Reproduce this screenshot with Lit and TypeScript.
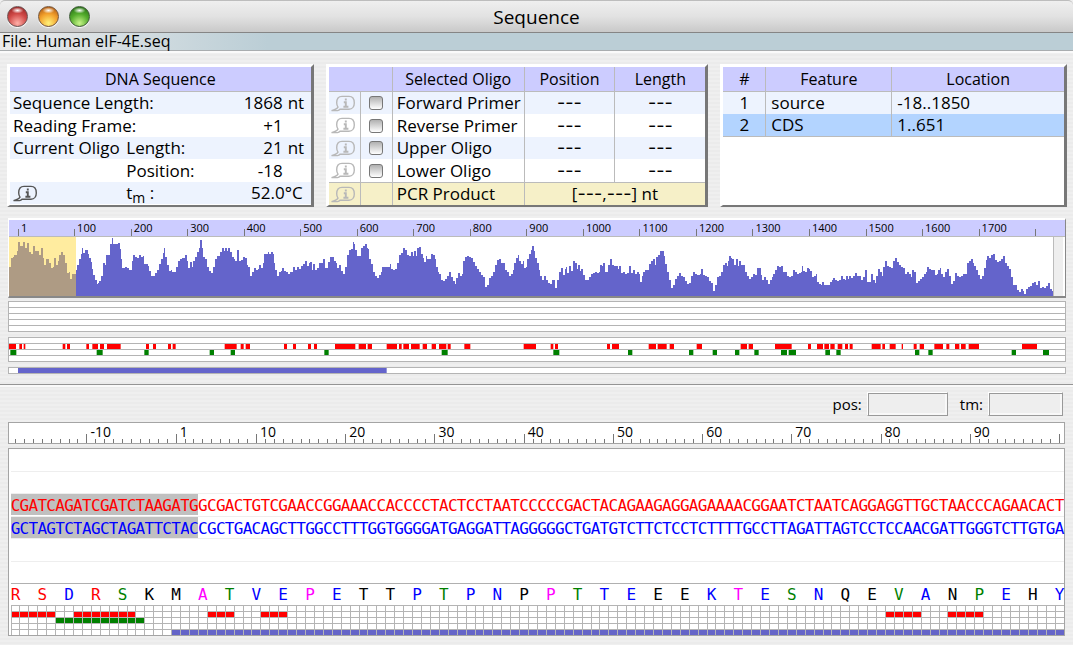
import { LitElement, html, css, svg, nothing } from "lit";
import { customElement, property } from "lit/decorators.js";
import { classMap } from "lit/directives/class-map.js";

const FORWARD =
  "CGATCAGATCGATCTAAGATGGCGACTGTCGAACCGGAAACCACCCCTACTCCTAATCCCCCGACTACAGAAGAGGAGAAAACGGAATCTAATCAGGAGGTTGCTAACCCAGAACACT";
const PAIR: Record<string, string> = { A: "T", T: "A", C: "G", G: "C" };
const REVERSE = [...FORWARD].map((b) => PAIR[b]).join("");
const COLUMNS = FORWARD.length;
const SELECTED = 21;

// One letter per codon, and the colour class of each (r, b, g, m or k).
const PROTEIN = "RSDRSKMATVEPETTPTPNPPTTEEEKTESNQEVANPEHY";
const PROTEIN_COLORS = "rrbrgkkmgbbmbkkbgbbkmgbbkkbmbgbkkgbkgbkb";

// Runs of cells in the detail grid: row, first cell, end cell, colour.
const CELL_RUNS: [number, number, number, string][] = [
  [1, 0, 5, "#f00"], [1, 7, 14, "#f00"], [1, 22, 25, "#f00"], [1, 28, 31, "#f00"],
  [1, 98, 102, "#f00"], [1, 105, 109, "#f00"], [2, 5, 15, "#008000"], [4, 18, 118, "#6464c8"],
];

// The profile is stored in three tiles of thirds of a unit: tile offset, then x, y pairs.
const PROFILE: [number, number[]][] = [
  [0, [28,158,32,130,38,128,42,122,50,110,54,80,60,92,66,92,70,80,76,98,82,85,86,112,92,118,98,94,104,110,110,108,116,122,122,98,128,130,132,152,138,134,146,146,152,162,158,156,162,130,168,150,174,140,178,122,182,112,190,122,196,146,200,176,206,174,210,194,216,180,222,178,228,166,232,150,236,134,242,118,246,98,250,116,256,106,264,118,268,130,272,142,276,164,280,182,286,196,290,210,294,206,298,200,304,184,308,144,314,152,318,122,324,120,330,86,335,68,339,86,350,88,354,84,360,104,364,134,366,160,374,156,380,162,386,166,390,168,396,138,400,120,406,128,412,130,418,120,422,128,428,124,432,148,438,148,444,154,448,170,454,184,460,184,466,176,472,168,476,148,482,134,488,114,492,98,496,128,500,152,506,170,512,166,516,174,522,174,528,156,534,138,540,132,546,130,552,130,556,122,560,140,564,160,570,142,576,158,580,138,584,126,590,112,596,100,600,76,606,100,610,126,616,134,620,156,626,170,632,176,638,156,644,132,650,124,656,124,660,112,666,98,672,110,676,98,680,110,684,98,690,112,696,126,702,134,706,140,712,106,718,138,724,136,730,128,736,130,740,150,744,158,750,184,756,172,762,160,768,166,774,164,778,150,782,160,788,146,792,118,798,118,804,112,808,118,812,112,818,118,822,146,826,168,832,184,836,172,842,170,846,160,852,170,858,172,864,180,870,174,876,174,880,158,886,166,892,158,898,164,904,154,910,148,916,140,922,154,926,146,930,142,936,168,940,148,946,166,952,162,958,146,964,146,968,134,974,162,978,160,984,142,990,128,996,128,1002,138,1008,144,1012,160,1018,150,1022,170,1030,180,1036,158,1040,122,1046,106]],
  [350, [0,106,4,104,8,80,12,88,16,106,22,124,28,124,32,98,38,94,44,86,50,98,54,104,58,132,64,148,70,172,76,184,82,192,86,182,92,172,96,158,102,158,108,158,114,156,120,148,124,164,130,168,136,164,142,146,146,122,152,114,158,98,164,106,170,122,176,124,182,112,188,124,192,108,198,124,202,98,208,96,212,118,218,130,222,142,228,124,232,132,238,134,244,118,250,122,254,134,258,158,264,172,268,178,274,196,280,200,286,194,292,184,298,174,304,188,308,200,314,208,318,190,324,176,330,184,336,180,340,140,344,128,350,124,356,128,362,130,368,142,374,154,380,164,386,172,392,182,398,188,404,218,410,212,416,190,422,184,428,172,434,150,440,136,446,134,452,146,458,146,464,168,470,172,476,184,482,180,488,168,492,146,498,130,504,122,508,140,514,148,518,140,522,160,528,158,532,132,538,118,542,106,546,92,552,110,556,130,562,146,566,168,570,184,576,198,582,184,588,196,594,206,600,210,606,196,612,198,616,222,622,196,628,174,634,160,638,182,644,164,648,158,652,176,656,154,662,170,668,140,674,144,680,164,684,150,690,170,694,164,700,182,706,196,712,196,718,188,722,178,728,176,734,172,740,176,746,172,750,150,756,154,760,144,764,174,770,172,774,150,780,134,786,150,792,154,798,154,804,164,808,154,812,176,820,174,826,180,832,176,836,154,842,176,848,168,854,178,860,174,866,178,870,204,876,184,880,172,886,168,892,166,898,148,902,140,908,134,914,150,918,126,924,122,930,108,936,110,942,124,946,148,952,172,958,196,964,222,970,212,976,194,982,186,988,176,994,184,1000,188,1006,200,1012,208,1018,206,1024,184,1030,172,1036,178,1042,182]],
  [700, [0,178,4,164,8,182,14,184,20,188,26,200,32,206,38,232,44,212,50,188,56,184,62,172,68,150,74,146,80,154,84,140,88,124,92,130,96,134,102,150,108,134,114,154,118,138,124,150,130,150,136,172,142,184,148,194,154,188,160,180,166,182,170,160,176,162,182,182,186,196,192,188,198,196,204,210,210,196,216,188,220,178,226,166,230,154,236,158,242,154,248,174,254,172,260,186,266,188,272,184,278,166,284,174,290,180,296,176,302,172,306,154,310,170,316,174,320,162,326,164,330,170,336,188,342,184,348,178,352,204,358,208,362,212,366,202,372,212,378,214,386,212,390,202,396,196,400,190,406,196,412,200,418,198,424,184,430,194,434,196,438,184,444,194,448,184,454,190,460,184,466,176,472,186,478,186,484,196,488,188,494,168,500,204,506,202,512,180,518,196,524,206,528,186,534,164,540,172,546,184,550,158,556,140,562,154,568,158,574,160,580,138,586,130,592,142,598,150,604,156,610,160,616,178,620,172,626,180,632,188,636,166,642,174,648,206,654,200,660,194,666,188,672,180,678,174,682,158,688,164,692,168,698,166,704,182,710,180,714,168,720,162,724,180,730,188,736,174,742,164,748,186,752,210,758,200,764,176,770,184,776,188,782,184,788,178,794,178,800,146,806,140,812,134,818,146,822,154,828,168,834,182,840,194,846,186,852,160,858,136,862,124,868,130,874,122,880,118,886,136,892,142,898,138,904,134,908,124,914,146,920,154,926,164,932,188,938,214,944,212,950,228,956,234,962,226,968,232,972,240,978,226,984,218,990,216,996,206,1002,202,1008,214,1014,200,1020,222,1026,218,1032,222,1038,216,1044,206,1050,226,1056,230]],
];

const profilePath = (() => {
  const left = 9;
  let d = "M0 60";
  for (const [offset, values] of PROFILE) {
    for (let i = 0; i < values.length; i += 2) {
      const x = Math.round(offset + values[i] / 3 - left);
      d += `H${x}V${((values[i + 1] - 66) / 3).toFixed(1)}`;
    }
  }
  return d + "H1044V60Z";
})();

type Tile = [number, number[]];
const RED_TILES: Tile[] = [
  [0, [27,48,58,66,71,76,188,196,201,210,259,267,277,294,300,312,321,362,438,447,459,468,504,513,518,527,674,710,722,731,737,750,852,861,879,888,924,933,942,951,1005,1066]],
  [350, [26,48,53,66,110,141,147,155,160,177,183,209,218,231,245,258,267,289,293,302,343,361,521,558,602,610,615,624,771,780,786,807,896,918,923,950,959,972,1040,1056]],
  [700, [122,141,146,159,225,275,324,333,351,369,373,387,391,404,413,427,435,444,449,458,515,542,547,555,569,587,605,609,641,650,659,672,703,729,739,748,765,778,783,797,806,837,966,1011]],
];
const GREEN_TILES: Tile[] = [
  [0, [31,49,290,308,433,446,629,642,692,705,973,986]],
  [350, [275,293,610,628,834,847,1017,1030]],
  [700, [38,51,105,118,163,176,243,261,266,288,376,390,409,422,645,658,685,698,935,948,1029,1047]],
];
const CDS_TILES: Tile[] = [[0, [54, 1160]]];

const marks = (tiles: Tile[], fill: string) => html`
  <svg class="marks" viewBox="0 0 1056 5" preserveAspectRatio="none" aria-hidden="true">
    ${tiles.map(([offset, v]) =>
      v.map((x, i) =>
        i % 2 ? nothing : svg`<rect x=${offset + x / 3 - 9} y="0" width=${(v[i + 1] - x) / 3} height="5" fill=${fill} />`
      )
    )}
  </svg>`;

@customElement("info-button")
export class InfoButton extends LitElement {
  @property() label = "Info";
  @property({ type: Boolean }) off = false;

  static styles = css`
    :host { display: block; }
    button { display: block; margin: 0; padding: 0; border: 0; background: none; color: #555; }
    button:disabled { color: #b8b8b8; }
    svg { display: block; width: 24px; height: 17px; }
  `;

  render() {
    return html`<button type="button" aria-label=${this.label} ?disabled=${this.off}>
      <svg viewBox="0 0 24 17" fill="none" stroke="currentColor" stroke-width="1.4">
        <path d="M.5 15.6H6.5C7.6 15.4 8.4 14.9 9 14.2H18C21.4 14.2 23.3 11.4 23.3 7.9C23.3 4.2 21.4 1.4 18 1.4H11C7.5 1.4 5.7 4.2 5.7 7.8C5.7 9.6 6.1 11 7 12.1C6 13.8 3.8 14.9 .5 15.6Z" />
        <path d="M14.8 3.6V5.4M12.8 7.2H14.8V11.4M12.4 11.7H17.4" stroke-width="1.9" />
      </svg>
    </button>`;
  }
}

@customElement("app-root")
export class AppRoot extends LitElement {
  static styles = css`
    :host {
      display: block;
      min-height: 100vh;
      box-sizing: border-box;
      padding-bottom: 9px;
      background: repeating-linear-gradient(#efefef 0 2px, #ebebeb 2px 4px);
      color: #000;
      font: 17px/22px "Open Sans", "Noto Sans", sans-serif;
    }
    * { box-sizing: border-box; }
    .title {
      display: grid;
      grid-template-columns: 1fr auto 1fr;
      align-items: center;
      height: 33px;
      padding: 0 7px;
      border-top: 1px solid #bdbdbd;
      border-bottom: 1px solid #858585;
      border-radius: 5px 5px 0 0;
      background: linear-gradient(#efefef, #e2e2e2 50%, #c9c9c9);
    }
    .title h1 { margin: 0; font-size: 19px; line-height: 24px; font-weight: 400; }
    .lights { display: flex; gap: 10px; }
    .light {
      width: 21px; height: 21px; padding: 0;
      border: 1px solid #6b5050; border-radius: 50%;
      box-shadow: 0 1px 1px #fff;
    }
    .close { background: radial-gradient(ellipse 6px 3px at 50% 18%, #fff, transparent), radial-gradient(circle at 50% 85%, #ffb0a8, #d04a48 50%, #8d1c1c); }
    .min { background: radial-gradient(ellipse 6px 3px at 50% 18%, #fff, transparent), radial-gradient(circle at 50% 85%, #fff27a, #f2a02c 50%, #a04a10); border-color: #75553a; }
    .zoom { background: radial-gradient(ellipse 6px 3px at 50% 18%, #fff, transparent), radial-gradient(circle at 50% 85%, #c8f58a, #53ab2c 50%, #1e6412); border-color: #3c5a35; }
    .file {
      margin: 0; padding: 0 2px; height: 18px;
      font-size: 16px; line-height: 17px;
      border-bottom: 1px solid #a9adaf;
      box-shadow: 0 2px 0 #fafafa;
      background: linear-gradient(90deg, #ebebeb, #bbced6 25%);
    }
    .panels {
      display: grid;
      grid-template-columns: 307fr 383fr 347fr;
      gap: 12px;
      padding: 13px 6px 0 7px;
    }
    .panel {
      background: #fff;
      border: solid;
      border-width: 3px 3px 2px 3px;
      border-color: #fff #777 #777 #fff;
    }
    table { width: 100%; border-collapse: separate; border-spacing: 0; table-layout: fixed; }
    th, td { padding: 0; font-weight: 400; text-align: left; white-space: nowrap; }
    tr { height: 22px; }
    tbody tr:nth-child(even) { height: 23px; }
    tbody tr:nth-child(odd) { background: #edf3fe; }
    thead tr { height: 25px; background: #ccf; }
    thead th { font-size: 16px; text-align: center; }
    thead tr > * { border-bottom: 1px solid #bbb; }
    .lined th + th, .lined th + td, .lined td + td, .lined td + th { border-left: 1px solid #bbb; }
    .summary tbody th { padding-left: 3px; }
    .summary .indent { padding-left: 2px; }
    .num { text-align: right; }
    .unit { padding-left: 5px; }
    .degrees { text-align: right; padding-right: 8px; }
    sub { font-size: 14px; line-height: 0; vertical-align: -4px; }
    .oligos tbody th { padding-left: 4px; }
    .dashes { text-align: center; }
    .dash { font-family: Inter, sans-serif; font-size: 18px; line-height: 20px; }
    .oligos tbody tr.product { background: #f6f0c8; }
    .oligos tbody .product > * { border-top: 1px solid #bbb; }
    .oligos info-button { padding-left: 2px; }
    .tick { text-align: center; line-height: 0; }
    input[type="checkbox"] {
      appearance: none; width: 14px; height: 14px; margin: 0;
      border: 1px solid #777; border-radius: 3px;
      background: linear-gradient(#b0b0b0, #fff);
      vertical-align: middle;
    }
    .features tbody td { padding-left: 5px; }
    .features tbody .index { padding: 0; text-align: center; }
    .features tbody .current { background: #b3d4ff; }
    .features tbody .current > * { border-bottom: 1px solid #bbb; }
    .overview { padding: 11px 7px 10px 8px; border-bottom: 1px solid #959595; box-shadow: 0 2px 0 #fafafa; }
    .profile {
      background: #fff;
      border: solid;
      border-width: 2px 1px 2px 1px;
      border-color: #fff #888 #888 #fff;
    }
    .scale { display: flex; height: 17px; background: #ccf; border-bottom: 1px solid #bbb; font-size: 11px; line-height: 16px; }
    .scale span {
      min-width: 0; padding-left: 3px;
      background: linear-gradient(#777, #777) no-repeat left bottom / 1px 7px;
    }
    .scale .lead { background: none; padding: 0; }
    .plot { display: block; width: 100%; height: 59px; }
    .lanes { margin-top: 3px; border: 1px solid #b4b4b4; background: #b4b4b4; display: grid; gap: 1px; }
    .lanes + .lanes { margin-top: 5px; }
    .lane { height: 5px; background: #fff; }
    .marks { display: block; width: 100%; height: 5px; }
    .detail { padding: 7px 8px 0; }
    .readout { display: flex; justify-content: flex-end; align-items: center; gap: 5px; padding-right: 2px; font-size: 15px; }
    .readout label + input { margin-right: 7px; }
    .readout input:last-child { margin-right: 0; }
    .readout input {
      width: 81px; height: 24px; padding: 0 4px; font: inherit;
      background: #eee; outline: 0;
      border: 1px solid; border-color: #fff #999 #999 #fff;
      box-shadow: inset 1px 1px 0 #999, inset -2px -2px 0 #f8f8f8;
    }
    .readout .tm { width: 75px; }
    .ruler, .bases { background: #fff; border: 1px solid #a4a4a4; padding-left: 2px; }
    .ruler { margin-top: 6px; }
    .cells { display: grid; grid-template-columns: repeat(118, minmax(0, 1fr)); }
    .ruler .cells { height: 20px; font-size: 14px; line-height: 18px; }
    .ruler svg { grid-area: 1 / 1 / -1 / -1; width: 100%; height: 20px; }
    .mark { grid-row: 1; padding-left: 8px; white-space: nowrap; }
    .bases { margin-top: 4px; }
    .row { height: 22px; border-bottom: 1px solid #eee; line-height: 24px; font-family: "DejaVu Sans Mono", monospace; font-size: 16px; }
    .row:nth-child(odd) { height: 23px; }
    .row span, .protein span { display: flex; justify-content: center; }
    .row .picked { height: 21px; background: #c0c0c0; }
    .forward { color: #f00; }
    .reverse { color: #00f; }
    .row.last { border-color: #b0b0b0; }
    .protein { height: 21px; line-height: 22px; font-family: "DejaVu Sans Mono", monospace; font-size: 16px; }
    .r { color: #f00; } .b { color: #00f; } .g { color: #008000; } .m { color: #f0f; } .k { color: #000; }
    .matrix { display: block; width: 100%; height: 30px; }
  `;

  private strand(bases: string, kind: string) {
    return html`<div class="row cells ${kind}">
      ${[...bases].map((b, i) => html`<span class=${classMap({ picked: i < SELECTED })}>${b}</span>`)}
    </div>`;
  }

  private oligo(name: string) {
    return html`<tr>
      <td><info-button off label="${name} info"></info-button></td>
      <td class="tick"><input type="checkbox" aria-label=${name} /></td>
      <th scope="row">${name}</th>
      <td class="dashes dash">---</td>
      <td class="dashes dash">---</td>
    </tr>`;
  }

  private summary() {
    return html`<section class="panel summary">
      <table>
        <colgroup><col style="width:38%" /><col /><col style="width:20%" /><col style="width:28px" /></colgroup>
        <thead><tr><th colspan="4">DNA Sequence</th></tr></thead>
        <tbody>
          <tr><th colspan="2">Sequence Length:</th><td class="num">1868</td><td class="unit">nt</td></tr>
          <tr><th colspan="2">Reading Frame:</th><td class="num">+1</td><td></td></tr>
          <tr><th>Current Oligo</th><th class="indent">Length:</th><td class="num">21</td><td class="unit">nt</td></tr>
          <tr><td></td><th class="indent">Position:</th><td class="num">-18</td><td></td></tr>
          <tr>
            <th><info-button label="Oligo info"></info-button></th>
            <th class="indent">t<sub>m</sub> :</th>
            <td class="degrees" colspan="2">52.0°C</td>
          </tr>
        </tbody>
      </table>
    </section>`;
  }

  private oligos() {
    return html`<section class="panel oligos">
      <table class="lined">
        <colgroup><col style="width:31px" /><col style="width:32px" /><col style="width:35%" /><col /><col /></colgroup>
        <thead><tr><td colspan="2"></td><th>Selected Oligo</th><th>Position</th><th>Length</th></tr></thead>
        <tbody>
          ${["Forward Primer", "Reverse Primer", "Upper Oligo", "Lower Oligo"].map((n) => this.oligo(n))}
          <tr class="product">
            <td><info-button off label="PCR Product info"></info-button></td>
            <td></td>
            <th scope="row">PCR Product</th>
            <td class="dashes" colspan="2">[<span class="dash">---</span>,<span class="dash">---</span>] nt</td>
          </tr>
        </tbody>
      </table>
    </section>`;
  }

  private features() {
    return html`<section class="panel features">
      <table class="lined">
        <colgroup><col style="width:42px" /><col style="width:37%" /><col /></colgroup>
        <thead><tr><th>#</th><th>Feature</th><th>Location</th></tr></thead>
        <tbody>
          <tr><td class="index">1</td><td>source</td><td>-18..1850</td></tr>
          <tr class="current"><td class="index">2</td><td>CDS</td><td>1..651</td></tr>
        </tbody>
      </table>
    </section>`;
  }

  private overview() {
    const stops: [string, number][] = [["1", 99]];
    for (let p = 100; p <= 1700; p += 100) stops.push([String(p), 100]);
    stops.push(["", 50]);
    return html`<section class="overview">
      <div class="profile">
        <div class="scale">
          <span class="lead" style="flex:17 1 0"></span>
          ${stops.map(([t, n]) => html`<span style="flex:${n} 1 0">${t}</span>`)}
        </div>
        <svg class="plot" viewBox="0 0 1056 60" preserveAspectRatio="none" aria-label="Duplex stability">
          <rect x="1044" y="0" width="10" height="60" fill="#eee" />
          <rect x="1044" y="0" width="1" height="60" fill="#bbb" />
          <path d=${profilePath} fill="#6464cb" shape-rendering="crispEdges" />
          <rect x="0" y="0" width="67" height="60" fill="#ffd837" fill-opacity=".48" />
        </svg>
      </div>
      <div class="lanes">${[0, 1, 2, 3, 4].map(() => html`<div class="lane"></div>`)}</div>
      <div class="lanes">
        <div class="lane"></div>
        <div class="lane">${marks(RED_TILES, "#f00")}</div>
        <div class="lane">${marks(GREEN_TILES, "#008000")}</div>
        <div class="lane"></div>
      </div>
      <div class="lanes"><div class="lane">${marks(CDS_TILES, "#6464cb")}</div></div>
    </section>`;
  }

  private ruler() {
    const majors: [number, string][] = [[8, "-10"], [18, "1"]];
    for (let n = 10; n <= 90; n += 10) majors.push([n + 17, String(n)]);
    const tall = new Set([...majors.map(([i]) => i), COLUMNS - 1]);
    return html`<div class="ruler"><div class="cells">
      <svg viewBox="0 0 ${COLUMNS} 20" preserveAspectRatio="none" aria-hidden="true">
        ${[...FORWARD].map((_, i) => svg`<line x1=${i + 0.5} x2=${i + 0.5} y1=${tall.has(i) ? 11 : 16} y2="20"
          stroke="#777" vector-effect="non-scaling-stroke" shape-rendering="crispEdges" />`)}
      </svg>
      ${majors.map(([i, t]) => html`<span class="mark" style="grid-column:${i + 1} / span 5">${t}</span>`)}
    </div></div>`;
  }

  private matrix() {
    const line = (x1: number, y1: number, x2: number, y2: number) =>
      svg`<line x1=${x1} y1=${y1} x2=${x2} y2=${y2} stroke="#b4b4b4" vector-effect="non-scaling-stroke" shape-rendering="crispEdges" />`;
    return html`<svg class="matrix" viewBox="0 0 ${COLUMNS} 30" preserveAspectRatio="none" aria-hidden="true">
      ${CELL_RUNS.map(([row, from, to, fill]) => svg`<rect x=${from} y=${row * 6 + 1} width=${to - from} height="5" fill=${fill} />`)}
      ${[...FORWARD].map((_, i) => line(i, 0, i, 30))}
      ${[0, 1, 2, 3, 4].map((r) => line(0, r * 6 + 0.5, COLUMNS, r * 6 + 0.5))}
    </svg>`;
  }

  render() {
    return html`
      <header class="title">
        <div class="lights">
          <button class="light close" aria-label="Close"></button>
          <button class="light min" aria-label="Minimize"></button>
          <button class="light zoom" aria-label="Zoom"></button>
        </div>
        <h1>Sequence</h1>
      </header>
      <p class="file">File: Human eIF-4E.seq</p>
      <main>
        <div class="panels">${this.summary()}${this.oligos()}${this.features()}</div>
        ${this.overview()}
        <section class="detail">
          <div class="readout">
            <label for="pos">pos:</label><input id="pos" readonly />
            <label for="tm">tm:</label><input id="tm" class="tm" readonly />
          </div>
          ${this.ruler()}
          <div class="bases">
            <div class="row"></div>
            <div class="row"></div>
            ${this.strand(FORWARD, "forward")}
            ${this.strand(REVERSE, "reverse")}
            <div class="row"></div>
            <div class="row last"></div>
            <div class="protein cells">
              ${[...PROTEIN].map((aa, i) => html`<span class=${PROTEIN_COLORS[i]} style="grid-column:${i * 3 + 1}">${aa}</span>`)}
            </div>
            ${this.matrix()}
          </div>
        </section>
      </main>
    `;
  }
}
